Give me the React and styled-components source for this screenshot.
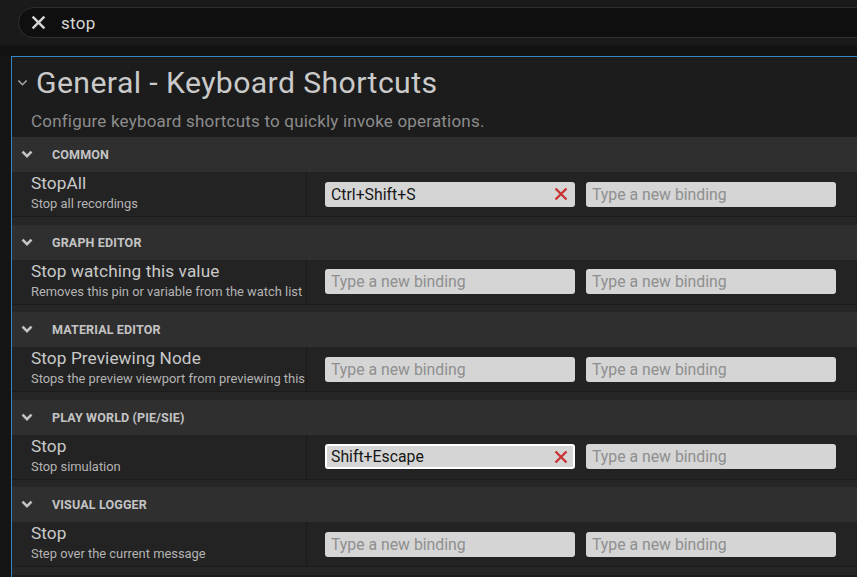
import React from "react";
import styled, { createGlobalStyle } from "styled-components";

const Global = createGlobalStyle`
  html, body { margin: 0; padding: 0; background: #141414; overflow: hidden; }
  body { font-family: Roboto, "Liberation Sans", sans-serif; width: 857px; height: 577px; }
  * { box-sizing: border-box; }
`;

const Page = styled.div`
  width: 857px;
  height: 577px;
  overflow: hidden;
  background: #141414;
  display: flex;
  flex-direction: column;
`;

const TopBar = styled.div`
  height: 46px;
  flex: none;
  background: #1a1a1a;
  padding: 7px 0 0 18px;
  border-bottom: 1px solid #161616;
`;

const SearchPill = styled.div`
  width: 880px;
  height: 31px;
  border: 1px solid #2e2e2e;
  border-radius: 16px;
  background: #0f0f0f;
  display: flex;
  align-items: center;
  padding-left: 12px;
  gap: 15px;
`;

const SearchText = styled.span`
  color: #d6d6d6;
  font-size: 17px;
  letter-spacing: 0.3px;
`;

const Gutter = styled.div`
  height: 10px;
  flex: none;
  background: #121212;
`;

const PanelWrap = styled.div`
  flex: 1;
  padding-left: 11px;
  background: #141414;
`;

const Panel = styled.div`
  height: 100%;
  background: #1c1c1c;
  border-left: 1px solid #3587c4;
  border-top: 1px solid #3587c4;
`;

const TitleBlock = styled.div`
  padding: 9px 0 6px 0;
`;

const TitleRow = styled.div`
  display: flex;
  align-items: center;
  gap: 8px;
  padding-left: 5px;
  height: 34px;
`;

const Title = styled.h1`
  margin: 0;
  font-weight: 400;
  font-size: 30.2px;
  line-height: 34px;
  color: #cacaca;
  letter-spacing: 0.4px;
`;

const Subtitle = styled.div`
  margin-top: 11px;
  padding-left: 19px;
  font-size: 17px;
  line-height: 20px;
  color: #8c8c8c;
  letter-spacing: 0.2px;
`;

const SectionHeader = styled.div`
  height: 35px;
  background: #2f2f2f;
  display: flex;
  align-items: center;
  padding-left: 9px;
  gap: 19px;
`;

const SectionLabel = styled.span`
  font-size: 12.5px;
  font-weight: 700;
  color: #c4c4c4;
  letter-spacing: 0.15px;
`;

const Row = styled.div`
  height: 44px;
  background: #232323;
  display: grid;
  grid-template-columns: 295px 1fr;
`;

const NameCell = styled.div`
  border-right: 1px solid #1a1a1a;
  padding: 1px 0 0 19px;
  display: flex;
  flex-direction: column;
`;

const Name = styled.div`
  font-size: 17.2px;
  line-height: 20px;
  color: #c9c9c9;
  letter-spacing: 0.1px;
`;

const Desc = styled.div`
  margin-top: 3px;
  font-size: 12.9px;
  line-height: 16px;
  color: #b4b4b4;
  white-space: nowrap;
`;

const BindingCell = styled.div`
  display: flex;
  align-items: center;
  gap: 11px;
  padding-left: 18px;
`;

const Field = styled.div`
  width: 250px;
  height: 25px;
  border-radius: 3px;
  background: #d5d5d5;
  border: ${(p) => (p.$focused ? "2px solid #ffffff" : "none")};
  padding: 0 ${(p) => (p.$focused ? "5px" : "7px")} 0 ${(p) => (p.$focused ? "4px" : "6px")};
  display: flex;
  align-items: center;
  justify-content: space-between;
  font-size: 15.8px;
  color: ${(p) => (p.$placeholder ? "#8f8f8f" : "#161616")};
`;

const Spacer = styled.div`
  height: 8.5px;
  background: #262626;
  border-top: 1px solid #1b1b1b;
`;

const Chevron = ({ size = 12, stroke = 2.6, color = "#c4c4c4" }) => (
  <svg width={size} height={size * 0.7} viewBox="0 0 12 8" fill="none">
    <path d="M1.5 1.5 L6 6 L10.5 1.5" stroke={color} strokeWidth={stroke} strokeLinecap="butt" strokeLinejoin="miter" />
  </svg>
);

const ClearX = ({ size = 14, color = "#c93434", stroke = 2.4 }) => (
  <svg width={size} height={size} viewBox="0 0 14 14" fill="none">
    <path d="M1.5 1.5 L12.5 12.5 M12.5 1.5 L1.5 12.5" stroke={color} strokeWidth={stroke} />
  </svg>
);

const sections = [
  { label: "COMMON", name: "StopAll", desc: "Stop all recordings", binding: "Ctrl+Shift+S" },
  { label: "GRAPH EDITOR", name: "Stop watching this value", desc: "Removes this pin or variable from the watch list" },
  { label: "MATERIAL EDITOR", name: "Stop Previewing Node", desc: "Stops the preview viewport from previewing this" },
  { label: "PLAY WORLD (PIE/SIE)", name: "Stop", desc: "Stop simulation", binding: "Shift+Escape", focused: true },
  { label: "VISUAL LOGGER", name: "Stop", desc: "Step over the current message" },
];

const Binding = ({ value, focused }) =>
  value ? (
    <Field $focused={focused}>
      <span>{value}</span>
      <ClearX />
    </Field>
  ) : (
    <Field $placeholder>Type a new binding</Field>
  );

export default function App() {
  return (
    <Page>
      <Global />
      <TopBar>
        <SearchPill>
          <ClearX size={15} color="#d4d4d4" stroke={2.3} />
          <SearchText>stop</SearchText>
        </SearchPill>
      </TopBar>
      <Gutter />
      <PanelWrap>
        <Panel>
          <TitleBlock>
            <TitleRow>
              <Chevron size={11} stroke={1.7} color="#a8a8a8" />
              <Title>General - Keyboard Shortcuts</Title>
            </TitleRow>
            <Subtitle>Configure keyboard shortcuts to quickly invoke operations.</Subtitle>
          </TitleBlock>
          {sections.map((s) => (
            <React.Fragment key={s.label}>
              <SectionHeader>
                <Chevron />
                <SectionLabel>{s.label}</SectionLabel>
              </SectionHeader>
              <Row>
                <NameCell>
                  <Name>{s.name}</Name>
                  <Desc>{s.desc}</Desc>
                </NameCell>
                <BindingCell>
                  <Binding value={s.binding} focused={s.focused} />
                  <Binding />
                </BindingCell>
              </Row>
              <Spacer />
            </React.Fragment>
          ))}
        </Panel>
      </PanelWrap>
    </Page>
  );
}
